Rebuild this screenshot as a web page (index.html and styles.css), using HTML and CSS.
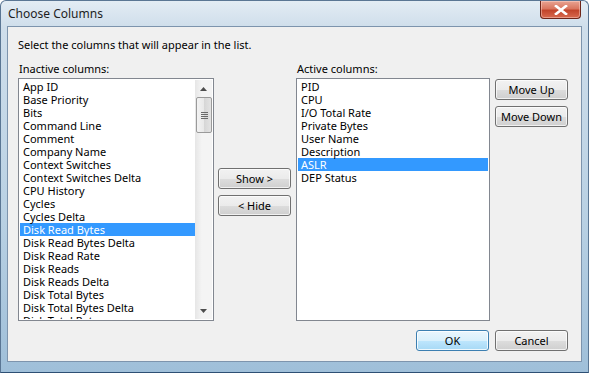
FILE: index.html
```html
<!DOCTYPE html>
<html lang="en">
<head>
  <meta charset="UTF-8">
  <title>Choose Columns</title>
  <link rel="stylesheet" href="styles.css">
</head>
<body>
  <div class="window">
    <div class="titlebar">
      <span class="title">Choose Columns</span>
      <button class="close" aria-label="Close">
        <svg width="14" height="10" viewBox="0 0 14 10"><path d="M2 1 L12 9 M12 1 L2 9" stroke="#fff" stroke-width="2.6" stroke-linecap="square"/></svg>
      </button>
    </div>

    <div class="client">
      <p class="intro">Select the columns that will appear in the list.</p>

      <div class="columns">
        <div class="col col-left">
          <label class="caption">Inactive columns:</label>
          <div class="listbox">
            <ul class="items">
              <li>App ID</li>
              <li>Base Priority</li>
              <li>Bits</li>
              <li>Command Line</li>
              <li>Comment</li>
              <li>Company Name</li>
              <li>Context Switches</li>
              <li>Context Switches Delta</li>
              <li>CPU History</li>
              <li>Cycles</li>
              <li>Cycles Delta</li>
              <li class="selected">Disk Read Bytes</li>
              <li>Disk Read Bytes Delta</li>
              <li>Disk Read Rate</li>
              <li>Disk Reads</li>
              <li>Disk Reads Delta</li>
              <li>Disk Total Bytes</li>
              <li>Disk Total Bytes Delta</li>
              <li>Disk Total Rate</li>
              <li>Disk Writes</li>
            </ul>
            <div class="scrollbar">
              <div class="arrow">
                <svg width="7" height="4" viewBox="0 0 7 4"><path d="M0 4 L3.5 0 L7 4 Z" fill="#4d4d4d"/></svg>
              </div>
              <div class="track">
                <div class="thumb">
                  <span class="grip"></span>
                </div>
              </div>
              <div class="arrow">
                <svg width="7" height="4" viewBox="0 0 7 4"><path d="M0 0 L7 0 L3.5 4 Z" fill="#4d4d4d"/></svg>
              </div>
            </div>
          </div>
        </div>

        <div class="mid-buttons">
          <button class="btn">Show &gt;</button>
          <button class="btn">&lt; Hide</button>
        </div>

        <div class="col col-right">
          <label class="caption">Active columns:</label>
          <div class="listbox">
            <ul class="items">
              <li>PID</li>
              <li>CPU</li>
              <li>I/O Total Rate</li>
              <li>Private Bytes</li>
              <li>User Name</li>
              <li>Description</li>
              <li class="selected">ASLR</li>
              <li>DEP Status</li>
            </ul>
          </div>
        </div>

        <div class="side-buttons">
          <button class="btn">Move Up</button>
          <button class="btn">Move Down</button>
        </div>
      </div>

      <div class="footer">
        <button class="btn btn-default">OK</button>
        <button class="btn">Cancel</button>
      </div>
    </div>
  </div>
</body>
</html>
```

FILE: styles.css
```css
/* General */
body {
  margin: 0;
  padding: 0;
  font-family: 'Noto Sans', 'Liberation Sans', sans-serif;
  font-size: 11px;
  color: #000;
  background: #fff;
}

/* Window frame */
.window {
  width: 589px;
  height: 373px;
  box-sizing: border-box;
  display: flex;
  flex-direction: column;
  padding: 0 6px 10px 6px;
  border: 1px solid #5a7694;
  border-bottom-color: #2d4f74;
  border-radius: 6px 6px 0 0;
  background: linear-gradient(to bottom, #e3ecf4 0, #cfdeeb 26px, #b8d0e3 60%, #9fbfd9 100%);
}

.titlebar {
  height: 25px;
  display: flex;
  align-items: flex-start;
  justify-content: space-between;
}

.title {
  margin-top: 5px;
  margin-left: 1px;
  font-size: 12px;
  line-height: 15px;
  color: #1e1e1e;
}

.close {
  width: 41px;
  height: 18px;
  margin-right: 1px;
  padding: 0;
  display: flex;
  align-items: center;
  justify-content: center;
  border: 1px solid #6e2519;
  border-top: none;
  border-radius: 0 0 4px 4px;
  background: linear-gradient(to bottom, #e8a493 0, #d9765f 45%, #c2452b 55%, #d86a4f 100%);
  box-shadow: inset 0 0 0 1px rgba(255, 220, 210, 0.45);
}

/* Client area */
.client {
  flex: 1;
  display: flex;
  flex-direction: column;
  padding: 0 10px;
  border: 1px solid #7d94ad;
  background: #f0f0f0;
}

.intro {
  margin: 10px 0 0 0;
  line-height: 15px;
}

.columns {
  display: flex;
  margin-top: 9px;
}

.col {
  display: flex;
  flex-direction: column;
}

.col-left {
  width: 196px;
}

.col-right {
  width: 194px;
  margin-left: 5px;
}

.caption {
  padding-left: 1px;
  height: 15px;
  line-height: 15px;
  margin-bottom: 2px;
}

/* List boxes */
.listbox {
  height: 243px;
  box-sizing: border-box;
  display: flex;
  border: 1px solid #828790;
  padding: 1px;
  background: #fff;
  overflow: hidden;
}

.items {
  flex: 1;
  list-style: none;
  margin: 0;
  padding: 0;
  overflow: hidden;
}

.items li {
  height: 13px;
  line-height: 13px;
  padding-left: 3px;
  white-space: nowrap;
}

.items li.selected {
  background: #3399ff;
  color: #fff;
}

/* Scrollbar */
.scrollbar {
  width: 17px;
  display: flex;
  flex-direction: column;
  background: linear-gradient(to right, #e6e6e6, #f4f4f4 40%, #f4f4f4);
}

.arrow {
  height: 17px;
  display: flex;
  align-items: center;
  justify-content: center;
}

.track {
  flex: 1;
}

.thumb {
  height: 36px;
  margin: 0 0 0 1px;
  box-sizing: border-box;
  display: flex;
  align-items: center;
  justify-content: center;
  border: 1px solid #9a9a9a;
  border-radius: 2px;
  background: linear-gradient(to right, #f3f3f3 0, #e8e8e8 50%, #d6d6d6 51%, #e3e3e3 100%);
}

.grip {
  width: 7px;
  height: 7px;
  background: repeating-linear-gradient(to bottom, #6a6a6a 0, #6a6a6a 1px, transparent 1px, transparent 2px);
}

/* Buttons */
.btn {
  width: 73px;
  height: 21px;
  padding: 0;
  border: 1px solid #707070;
  border-radius: 3px;
  font-family: inherit;
  font-size: 11px;
  color: #000;
  background: linear-gradient(to bottom, #f2f2f2 0, #ebebeb 50%, #dddddd 51%, #cfcfcf 100%);
  box-shadow: inset 0 0 0 1px rgba(255, 255, 255, 0.7);
}

.btn-default {
  border-color: #3c7fb1;
  background: linear-gradient(to bottom, #eaf6fd 0, #d9f0fc 50%, #bee6fd 51%, #a7d9f5 100%);
  box-shadow: inset 0 0 0 1px rgba(255, 255, 255, 0.8);
}

.mid-buttons {
  display: flex;
  flex-direction: column;
  gap: 6px;
  margin-left: 4px;
  padding-top: 107px;
}

.side-buttons {
  display: flex;
  flex-direction: column;
  gap: 6px;
  margin-left: 5px;
  padding-top: 18px;
}

.footer {
  display: flex;
  justify-content: flex-end;
  gap: 6px;
  margin-top: 9px;
  padding-right: 3px;
}
```
